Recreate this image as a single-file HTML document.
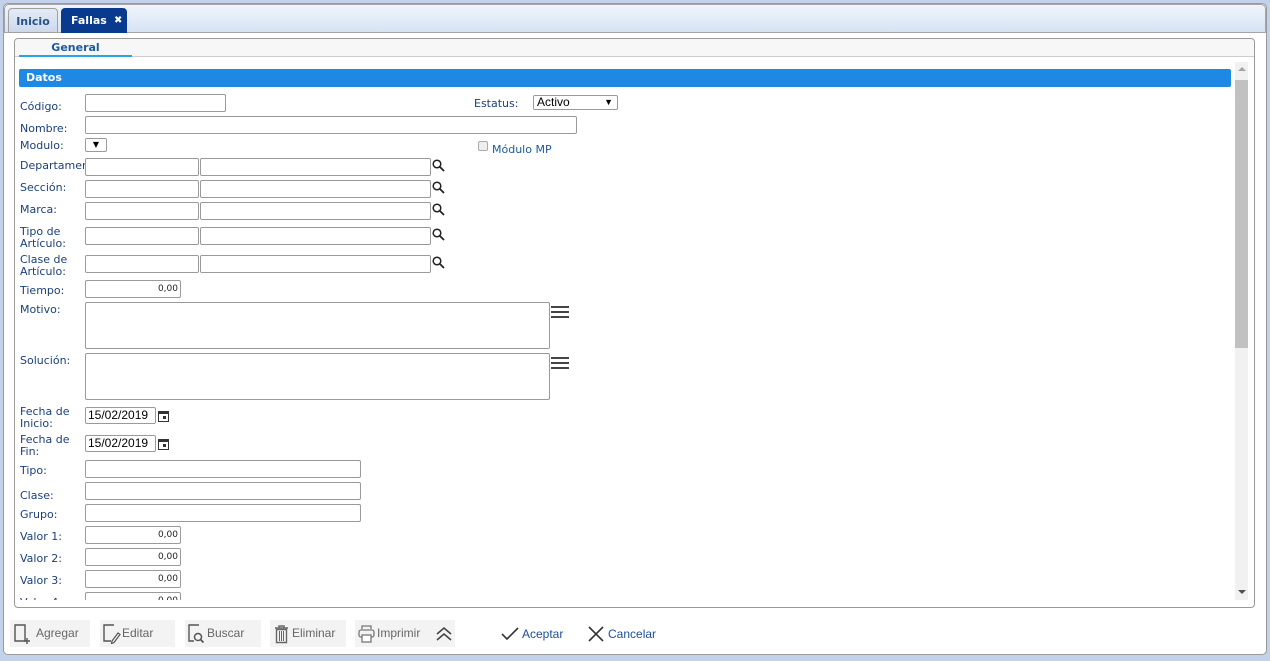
<!DOCTYPE html>
<html><head><meta charset="utf-8">
<style>
*{box-sizing:border-box;margin:0;padding:0}
html{width:1270px;height:661px;overflow:hidden}
body{width:1270px;height:661px;overflow:hidden;background:#c3d1ea;font-family:Verdana,"DejaVu Sans","Liberation Sans",sans-serif;font-size:11px;position:relative}
.a{position:absolute}
.outer{left:3px;top:3px;width:1264px;height:652px;background:#fff;border:1px solid #9a9a9a;border-radius:5px}
.strip{left:4px;top:4px;width:1262px;height:29px;background:linear-gradient(#f1f5fb,#d6e3f4);border:1px solid #a5a5a5;border-radius:5px 5px 0 0}
.tab{top:8px;height:25px;border-radius:4px 4px 0 0;font-weight:bold;font-size:11px;line-height:25px;text-align:center}
.inner{left:14px;top:38px;width:1241px;height:570px;border:1px solid #999;border-radius:4px;background:#fff}
.l{color:#1c3f7c;font-size:11px;line-height:12px;margin-top:1px}
.i{border:1px solid #9a9a9a;border-radius:2px;background:#fff;height:18px}
.n{font-size:9px;text-align:right;padding-right:2px;line-height:16px;color:#222}
.btn{top:620px;height:27px;background:#f3f3f3;color:#666;font-size:12px;line-height:27px;font-family:"Liberation Sans",sans-serif}
.btn svg{position:absolute;left:2px;top:4px}
.btn span{position:absolute;left:22px}
.mag{width:14px;height:14px}
</style></head><body>
<div class="a outer"></div>
<div class="a strip"></div>
<div class="a tab" style="left:8px;width:50px;background:linear-gradient(#e4ebf5,#ccd9ec);border:1px solid #a0a0a0;color:#2a4f8a">Inicio</div>
<div class="a tab" style="left:61px;width:66px;background:#0a3a8e;color:#fff;text-align:left;padding-left:10px">Fallas<span style="position:absolute;left:53px;font-size:10px">✖</span></div>

<div class="a inner"></div>
<div class="a" style="left:15px;top:39px;width:1239px;height:18px;background:#f7f7f7;border-bottom:1px solid #ccc;border-radius:4px 4px 0 0"></div>
<div class="a" style="left:19px;top:40px;width:113px;text-align:center;color:#1c5aa0;font-weight:bold;font-size:11px;line-height:15px">General</div>
<div class="a" style="left:19px;top:55px;width:113px;height:2px;background:#29a3e6"></div>

<div class="a" style="left:19px;top:69px;width:1212px;height:18px;background:#1e88e5;border-radius:2px;color:#fff;font-weight:bold;line-height:18px;padding-left:7px">Datos</div>
<div class="a" style="left:1235px;top:62px;width:13px;height:538px;background:#f1f1f1"></div>
<div class="a" style="left:1235px;top:80px;width:13px;height:268px;background:#c1c1c1"></div>
<div class="a" style="left:1238px;top:67px;width:0;height:0;border-left:4px solid transparent;border-right:4px solid transparent;border-bottom:4px solid #a3a3a3"></div>
<div class="a" style="left:1238px;top:590px;width:0;height:0;border-left:4px solid transparent;border-right:4px solid transparent;border-top:4px solid #505050"></div>

<div class="a" style="left:15px;top:88px;width:1219px;height:512px;overflow:hidden">
<div style="position:absolute;left:-15px;top:-88px;width:1270px;height:600px;overflow:hidden">
<div class="a l" style="left:20px;top:100px">Código:</div>
<div class="a i" style="left:85px;top:94px;width:141px"></div>
<div class="a l" style="left:474px;top:97px">Estatus:</div>
<div class="a i" style="left:533px;top:95px;width:85px;height:15px;font-size:12px;line-height:13px;padding-left:3px;color:#000;font-family:'Liberation Sans',sans-serif">Activo<span style="position:absolute;right:4px;font-size:9px">▼</span></div>
<div class="a l" style="left:20px;top:122px">Nombre:</div>
<div class="a i" style="left:85px;top:116px;width:492px"></div>
<div class="a l" style="left:20px;top:139px">Modulo:</div>
<div class="a i" style="left:85px;top:138px;width:22px;height:14px;font-size:8px;line-height:12px;text-align:center">▼</div>
<div class="a" style="left:478px;top:141px;width:10px;height:10px;border:1px solid #aaa;border-radius:2px;background:#eee"></div>
<div class="a l" style="left:492px;top:143px;color:#1c5aa0">Módulo MP</div>

<div class="a l" style="left:20px;top:159px;width:65px;overflow:hidden;white-space:nowrap">Departamento:</div>
<div class="a l" style="left:20px;top:181px">Sección:</div>
<div class="a l" style="left:20px;top:203px">Marca:</div>
<div class="a l" style="left:20px;top:225px">Tipo de<br>Artículo:</div>
<div class="a l" style="left:20px;top:253px">Clase de<br>Artículo:</div>

<div class="a l" style="left:20px;top:284px">Tiempo:</div>
<div class="a i n" style="left:85px;top:280px;width:96px">0,00</div>
<div class="a l" style="left:20px;top:303px">Motivo:</div>
<div class="a i" style="left:85px;top:302px;width:465px;height:47px"></div>
<div class="a l" style="left:20px;top:354px">Solución:</div>
<div class="a i" style="left:85px;top:353px;width:465px;height:47px"></div>
<svg class="a" style="left:551px;top:306px" width="19" height="13"><rect y="0" width="18" height="2" fill="#444"/><rect y="5" width="18" height="2" fill="#444"/><rect y="10" width="18" height="2" fill="#444"/></svg>
<svg class="a" style="left:551px;top:357px" width="19" height="13"><rect y="0" width="18" height="2" fill="#444"/><rect y="5" width="18" height="2" fill="#444"/><rect y="10" width="18" height="2" fill="#444"/></svg>

<div class="a l" style="left:20px;top:405px">Fecha de<br>Inicio:</div>
<div class="a i" style="left:85px;top:407px;width:71px;height:17px;font-size:12px;line-height:15px;padding-left:2px;color:#000;font-family:'Liberation Sans',sans-serif">15/02/2019</div>
<div class="a l" style="left:20px;top:433px">Fecha de<br>Fin:</div>
<div class="a i" style="left:85px;top:435px;width:71px;height:17px;font-size:12px;line-height:15px;padding-left:2px;color:#000;font-family:'Liberation Sans',sans-serif">15/02/2019</div>
<svg class="a" style="left:158px;top:410px" width="11" height="12"><rect x="0.5" y="1.5" width="10" height="10" fill="none" stroke="#333"/><rect x="0.5" y="1" width="10" height="3" fill="#333"/><rect x="5" y="6" width="3" height="3" fill="#333"/></svg>
<svg class="a" style="left:158px;top:438px" width="11" height="12"><rect x="0.5" y="1.5" width="10" height="10" fill="none" stroke="#333"/><rect x="0.5" y="1" width="10" height="3" fill="#333"/><rect x="5" y="6" width="3" height="3" fill="#333"/></svg>

<div class="a l" style="left:20px;top:464px">Tipo:</div>
<div class="a i" style="left:85px;top:460px;width:276px"></div>
<div class="a l" style="left:20px;top:489px">Clase:</div>
<div class="a i" style="left:85px;top:482px;width:276px"></div>
<div class="a l" style="left:20px;top:508px">Grupo:</div>
<div class="a i" style="left:85px;top:504px;width:276px"></div>
<div class="a l" style="left:20px;top:530px">Valor 1:</div>
<div class="a i n" style="left:85px;top:526px;width:96px">0,00</div>
<div class="a l" style="left:20px;top:552px">Valor 2:</div>
<div class="a i n" style="left:85px;top:548px;width:96px">0,00</div>
<div class="a l" style="left:20px;top:574px">Valor 3:</div>
<div class="a i n" style="left:85px;top:570px;width:96px">0,00</div>
<div class="a l" style="left:20px;top:596px">Valor 4:</div>
<div class="a i n" style="left:85px;top:592px;width:96px">0,00</div>
</div></div>

<div class="a i" style="left:85px;top:158px;width:114px"></div><div class="a i" style="left:200px;top:158px;width:231px"></div>
<div class="a i" style="left:85px;top:180px;width:114px"></div><div class="a i" style="left:200px;top:180px;width:231px"></div>
<div class="a i" style="left:85px;top:202px;width:114px"></div><div class="a i" style="left:200px;top:202px;width:231px"></div>
<div class="a i" style="left:85px;top:227px;width:114px"></div><div class="a i" style="left:200px;top:227px;width:231px"></div>
<div class="a i" style="left:85px;top:255px;width:114px"></div><div class="a i" style="left:200px;top:255px;width:231px"></div>
<svg class="a mag" style="left:432px;top:159px"><circle cx="5" cy="5" r="3.8" fill="none" stroke="#222" stroke-width="1.5"/><path d="M8 8L12 12" stroke="#222" stroke-width="1.8"/></svg>
<svg class="a mag" style="left:432px;top:181px"><circle cx="5" cy="5" r="3.8" fill="none" stroke="#222" stroke-width="1.5"/><path d="M8 8L12 12" stroke="#222" stroke-width="1.8"/></svg>
<svg class="a mag" style="left:432px;top:203px"><circle cx="5" cy="5" r="3.8" fill="none" stroke="#222" stroke-width="1.5"/><path d="M8 8L12 12" stroke="#222" stroke-width="1.8"/></svg>
<svg class="a mag" style="left:432px;top:228px"><circle cx="5" cy="5" r="3.8" fill="none" stroke="#222" stroke-width="1.5"/><path d="M8 8L12 12" stroke="#222" stroke-width="1.8"/></svg>
<svg class="a mag" style="left:432px;top:256px"><circle cx="5" cy="5" r="3.8" fill="none" stroke="#222" stroke-width="1.5"/><path d="M8 8L12 12" stroke="#222" stroke-width="1.8"/></svg>

<div class="a btn" style="left:10px;width:80px"><svg width="20" height="20"><path d="M3 1h10v16H3z" fill="none" stroke="#555" stroke-width="1.4"/><path d="M15 14v6M12 17h6" stroke="#555" stroke-width="1.4"/></svg><span style="left:26px">Agregar</span></div>
<div class="a btn" style="left:100px;width:75px"><svg width="20" height="20"><path d="M12 1H2v16h7" fill="none" stroke="#555" stroke-width="1.4"/><path d="M10 17l6-8 2 1.5-6 8-2.5 1z" fill="none" stroke="#555" stroke-width="1.2"/></svg><span>Editar</span></div>
<div class="a btn" style="left:185px;width:76px"><svg width="20" height="20"><path d="M12 1H2v16h5" fill="none" stroke="#555" stroke-width="1.4"/><circle cx="11" cy="13" r="3.5" fill="none" stroke="#555" stroke-width="1.5"/><path d="M13.5 15.5l3 3" stroke="#555" stroke-width="1.8"/></svg><span>Buscar</span></div>
<div class="a btn" style="left:270px;width:76px"><svg width="20" height="20"><path d="M3 4h13M7 4V2h5v2" fill="none" stroke="#666" stroke-width="1.4"/><path d="M4.5 5.5h10v13h-10z" fill="none" stroke="#666" stroke-width="1.4"/><path d="M7.5 7v10M9.5 7v10M11.5 7v10" stroke="#666" stroke-width="1"/></svg><span>Eliminar</span></div>
<div class="a btn" style="left:355px;width:77px"><svg width="20" height="20"><path d="M5 5V2h9v3" fill="none" stroke="#777" stroke-width="1.3"/><rect x="2" y="6" width="15" height="7" rx="2" fill="none" stroke="#777" stroke-width="1.3"/><rect x="5" y="11" width="9" height="7" fill="#fff" stroke="#777" stroke-width="1.3"/></svg><span>Imprimir</span></div>
<div class="a btn" style="left:432px;width:23px"><svg width="20" height="20" style="left:2px"><path d="M3 10l7-6 7 6M3 16l7-6 7 6" fill="none" stroke="#444" stroke-width="1.6"/></svg></div>
<svg class="a" style="left:501px;top:626px" width="18" height="16"><path d="M1 8l5 5L17 2" fill="none" stroke="#333" stroke-width="1.6"/></svg>
<div class="a" style="left:522px;top:627px;color:#1c4f96;font-size:12px;font-family:'Liberation Sans',sans-serif">Aceptar</div>
<svg class="a" style="left:588px;top:626px" width="16" height="16"><path d="M1 1l14 14M15 1L1 15" stroke="#333" stroke-width="1.6"/></svg>
<div class="a" style="left:608px;top:627px;color:#1c4f96;font-size:12px;font-family:'Liberation Sans',sans-serif">Cancelar</div>
</body></html>
